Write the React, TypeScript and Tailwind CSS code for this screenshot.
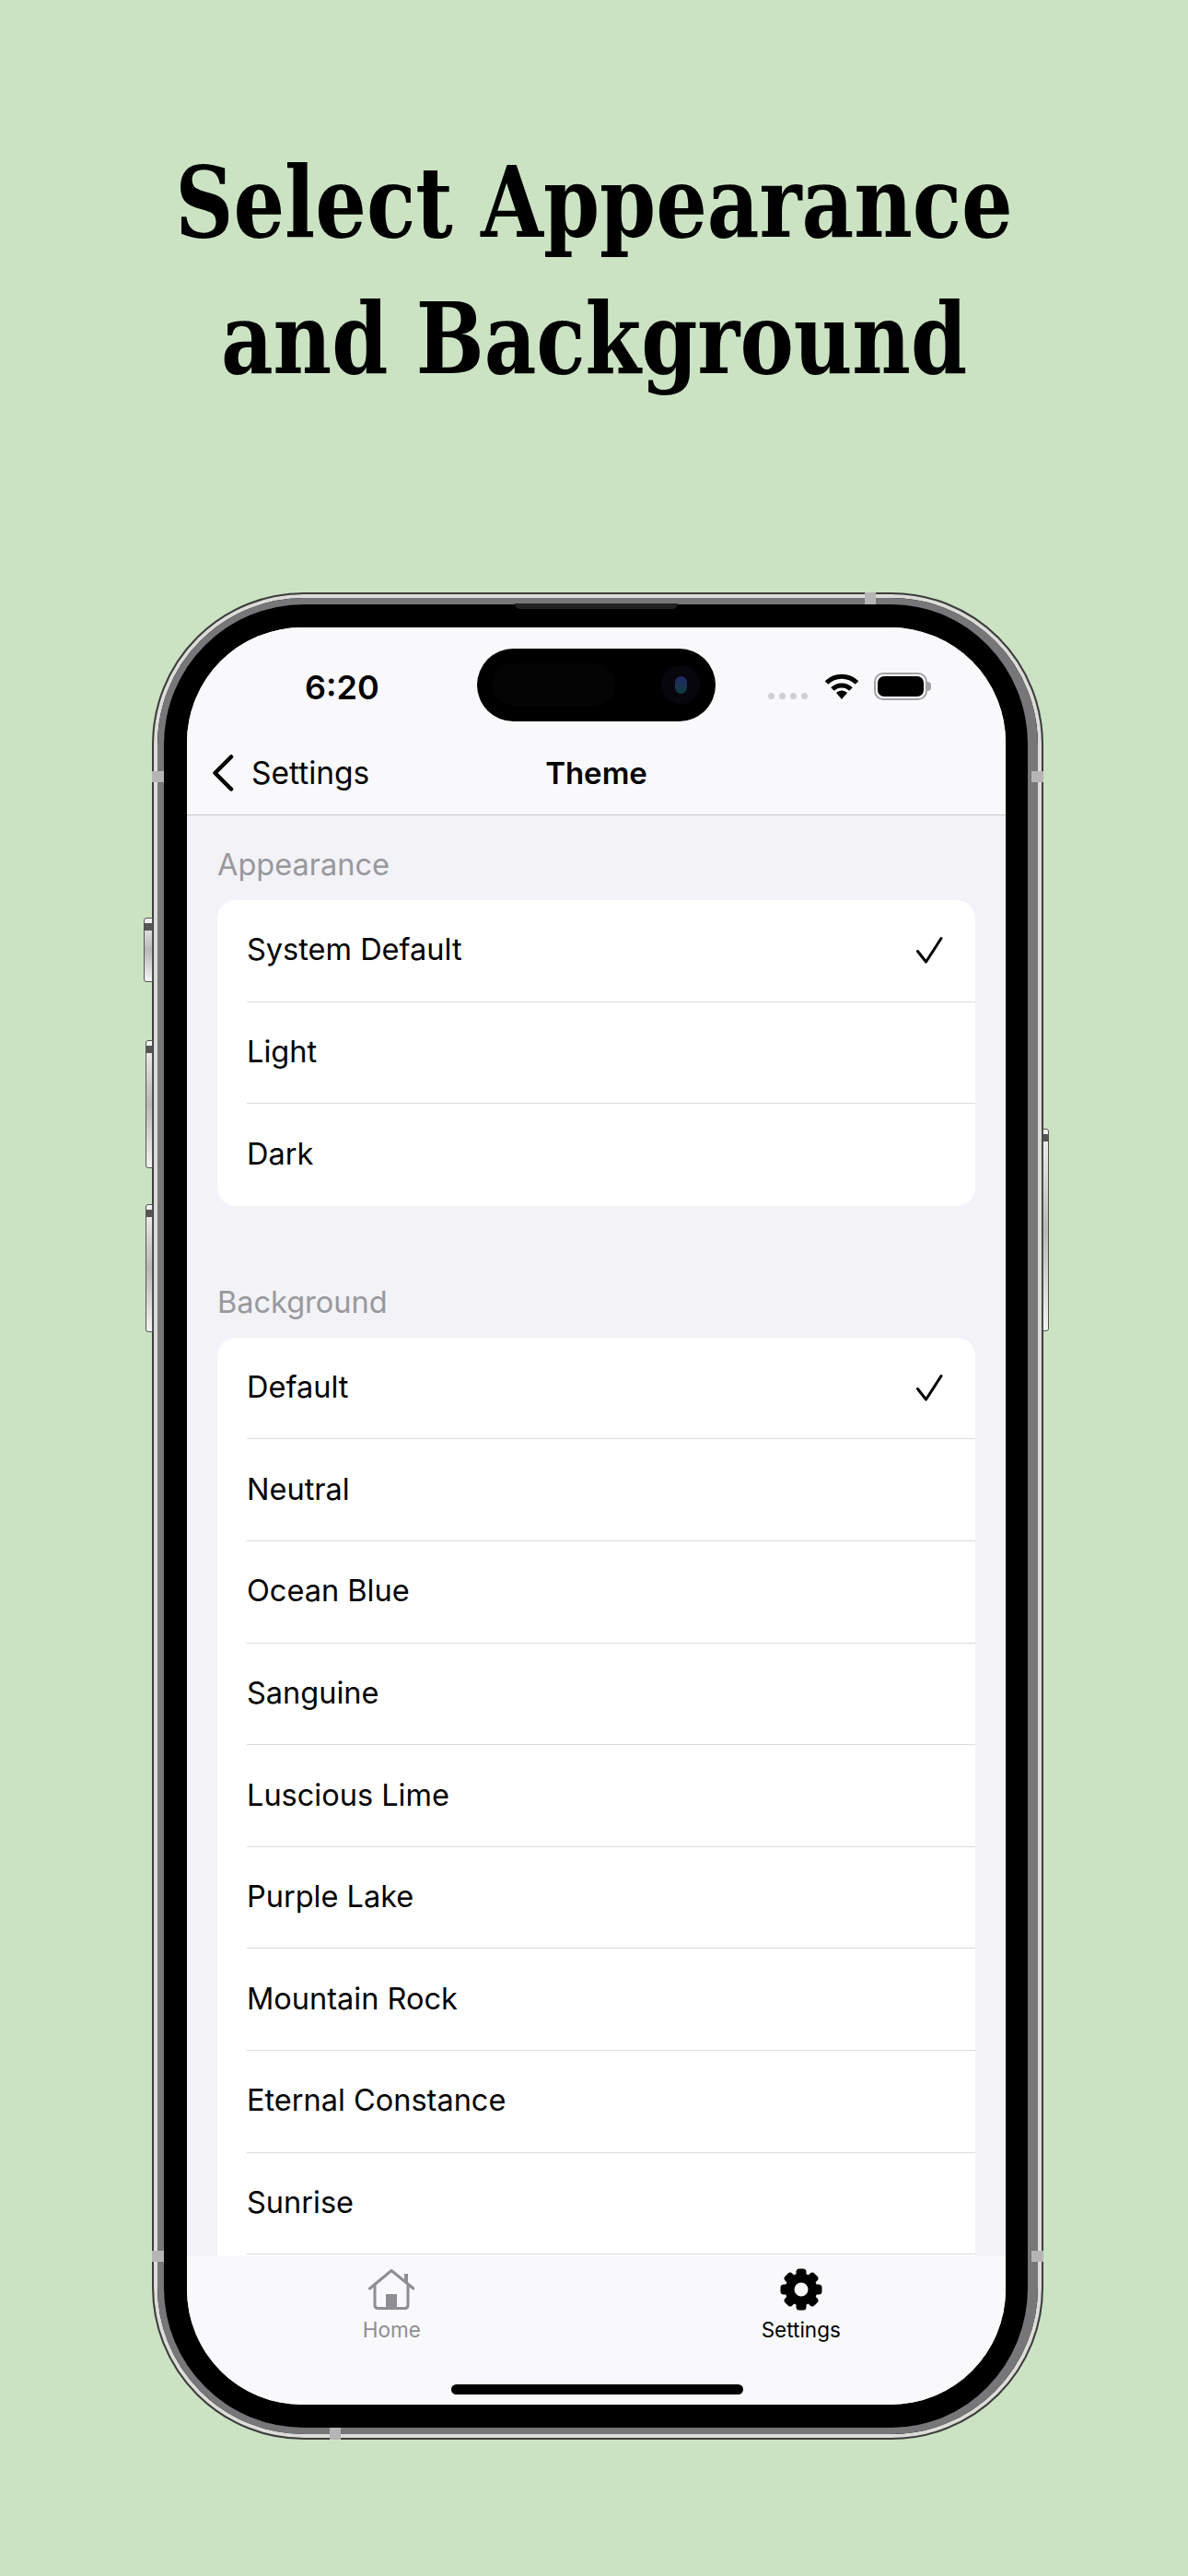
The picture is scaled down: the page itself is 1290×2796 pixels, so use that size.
const appearanceRows = ['System Default', 'Light', 'Dark'];
const backgroundRows = [
  'Default',
  'Neutral',
  'Ocean Blue',
  'Sanguine',
  'Luscious Lime',
  'Purple Lake',
  'Mountain Rock',
  'Eternal Constance',
  'Sunrise',
];

function Check() {
  return (
    <svg width="30" height="32" viewBox="0 0 30 32" fill="none" stroke="#000" strokeWidth="3" strokeLinecap="round" strokeLinejoin="round">
      <path d="M2.5 16.5 L11.5 28 L28 2.5" />
    </svg>
  );
}

function Section({ title, rows, checked, continues }: { title: string; rows: string[]; checked: string; continues?: boolean }) {
  return (
    <section className="mb-[51px]">
      <h2 className="pl-[33px] h-[92px] pt-[34px] text-[32.5px] leading-[40px] text-[#98989d]">{title}</h2>
      <div className="mx-[33px] rounded-[20px] bg-white overflow-hidden">
        {rows.map((row, i) => (
          <div key={row} className="pl-[32px] h-[110.6px]">
            <div className={`h-full pr-[35px] flex items-center justify-between ${continues || i < rows.length - 1 ? 'border-b border-[#dcdcde]' : ''}`}>
              <span className="text-[32.5px] text-black">{row}</span>
              {row === checked && <Check />}
            </div>
          </div>
        ))}
        {/* list scrolls on under the tab bar */}
        {continues && <div className="h-[110px]" />}
      </div>
    </section>
  );
}

function Wifi() {
  return (
    <svg width="38" height="30" viewBox="0 0 38 30" fill="none">
      <path d="M2.5 11 C12 2 26 2 35.5 11" stroke="#000" strokeWidth="5" strokeLinecap="butt" />
      <path d="M9 18 C14.5 12.5 23.5 12.5 29 18" stroke="#000" strokeWidth="5" />
      <path d="M13 22 C16.5 18.5 21.5 18.5 25 22 L19 29 Z" fill="#000" />
    </svg>
  );
}

function Home() {
  return (
    <svg width="50" height="44" viewBox="0 0 50 44" fill="none" stroke="#8e8e93" strokeWidth="3" strokeLinecap="round" strokeLinejoin="round">
      <path d="M1.5 21 L25 1.5 L49 21" />
      <path d="M41 5 V14" strokeWidth="4" strokeLinecap="butt" />
      <path d="M7 17 V39 Q7 42.5 10.5 42.5 H39.5 Q43 42.5 43 39 V17" />
      <rect x="19" y="27" width="12" height="16" fill="#8e8e93" stroke="none" />
    </svg>
  );
}

function Gear() {
  return (
    <svg width="46" height="46" viewBox="-23 -23 46 46">
      {[0, 45, 90, 135, 180, 225, 270, 315].map((deg) => (
        <rect key={deg} x="-5.5" y="-22.5" width="11" height="12" rx="3.5" fill="#000" transform={`rotate(${deg})`} />
      ))}
      <circle r="12.5" fill="none" stroke="#000" strokeWidth="10" />
    </svg>
  );
}

function SideButton({ className }: { className: string }) {
  return (
    <div className={`absolute bg-gradient-to-b from-[#f4f4f4] via-[#b9b9b9] to-[#f4f4f4] border border-[#555] ${className}`}>
      <div className="h-[8px] mt-[5px] bg-[#555]" />
    </div>
  );
}

export default function App() {
  return (
    <main
      className="w-[1290px] h-[2796px] bg-[#cbe3c3] overflow-hidden"
      style={{ fontFamily: 'Inter, "Liberation Sans", sans-serif' }}
    >
      <h1
        className="h-[643px] pt-[146px] text-center text-[106px] leading-[148px] font-bold font-stretch-condensed text-black scale-x-[0.917]"
        style={{ fontFamily: '"DejaVu Serif", serif' }}
      >
        Select Appearance
        <br />
        and Background
      </h1>

      <div className="relative ml-[165px] w-[968px] h-[2005px]">
        <SideButton className="left-[-9px] top-[353px] w-[10px] h-[70px] rounded-l-[3px]" />
        <SideButton className="left-[-7px] top-[486px] w-[8px] h-[139px] rounded-l-[3px]" />
        <SideButton className="left-[-7px] top-[664px] w-[8px] h-[139px] rounded-l-[3px]" />
        <SideButton className="right-[-6px] top-[582px] w-[7px] h-[220px] rounded-r-[3px]" />

        <div className="h-full rounded-[165px] border-2 border-[#3d3d3d] bg-black">
          <div className="h-full rounded-[163px] border-[4px] border-[#dcdcd8]">
            <div className="h-full rounded-[159px] border-[7px] border-r-[11px] border-[#77777a] bg-black py-[25px] pl-[25px] pr-[24px]">
              <div className="h-full rounded-[125px] bg-[#f2f2f7] overflow-hidden flex flex-col">
                <header className="bg-[#f9f9fb] border-b border-[#c8c8ca] h-[204px] shrink-0">
                  <div className="grid grid-cols-[315px_259px_315px] pt-[23px] h-[120px]">
                    <div className="pl-[128px] pt-[20px] text-[36px] leading-[45px] font-semibold text-black">6:20</div>
                    <div className="relative h-[79px] rounded-full bg-black">
                      <div className="absolute left-[17px] top-[16px] w-[133px] h-[46px] rounded-full bg-[#040404]" />
                      <div className="absolute left-[200px] top-[18px] w-[42px] h-[42px] rounded-full bg-[#07060c] flex items-center justify-center">
                        <div className="w-[13px] h-[19px] rounded-full bg-gradient-to-b from-[#23236a] to-[#0f3d3a]" />
                      </div>
                    </div>
                    <div className="flex pl-[57px] pt-[26px] gap-[16px] items-start">
                      <div className="flex gap-[5px] pt-[22px] w-[45px]">
                        {[0, 1, 2, 3].map((d) => (
                          <div key={d} className="w-[7px] h-[7px] rounded-full bg-[#cfcfd1] shrink-0" />
                        ))}
                      </div>
                      <Wifi />
                      <div className="flex items-center">
                        <div className="w-[58px] h-[30px] rounded-[10px] border-2 border-[#a3a3a5] p-[2px]">
                          <div className="h-full rounded-[7px] bg-black" />
                        </div>
                        <div className="w-[4px] h-[10px] rounded-r-full bg-[#a3a3a5]" />
                      </div>
                    </div>
                  </div>
                  <div className="relative flex items-center justify-center h-[76px]">
                    <div className="absolute left-[27px] top-[17px] flex items-center gap-[19px]">
                      <svg width="24" height="40" viewBox="0 0 24 40" fill="none" stroke="#000" strokeWidth="4.5" strokeLinecap="round" strokeLinejoin="round">
                        <path d="M21 2.5 L3.5 20 L21 37.5" />
                      </svg>
                      <span className="text-[33.5px] leading-[42px] text-black">Settings</span>
                    </div>
                    <span className="text-[33px] leading-[42px] font-semibold text-black">Theme</span>
                  </div>
                </header>

                <div className="flex-1 min-h-0 overflow-hidden">
                  <Section title="Appearance" rows={appearanceRows} checked="System Default" />
                  <Section title="Background" rows={backgroundRows} checked="Default" continues />
                </div>

                <nav className="relative shrink-0 h-[161px] bg-[#f9f9fb] grid grid-cols-2 pt-[13px]">
                  <div className="flex flex-col items-center text-[#8e8e93]">
                    <div className="h-[46px] flex items-center"><Home /></div>
                    <span className="mt-[7px] text-[22.5px] leading-[28px]">Home</span>
                  </div>
                  <div className="flex flex-col items-center text-black">
                    <div className="h-[46px] flex items-center"><Gear /></div>
                    <span className="mt-[7px] text-[22.5px] leading-[28px]">Settings</span>
                  </div>
                  <div className="absolute left-[287px] bottom-[11px] w-[317px] h-[11px] rounded-full bg-black" />
                </nav>
              </div>
            </div>
          </div>
        </div>

        {/* speaker slit and antenna bands lie over the frame */}
        <div className="absolute left-[394px] top-[12px] w-[177px] h-[6px] rounded-b-[6px] bg-[#222]" />
        <div className="absolute left-[774px] top-0 w-[12px] h-[13px] bg-[#b5b5b5]" />
        <div className="absolute left-[193px] bottom-0 w-[12px] h-[13px] bg-[#b5b5b5]" />
        <div className="absolute left-0 top-[194px] w-[13px] h-[12px] bg-[#b5b5b5]" />
        <div className="absolute right-0 top-[194px] w-[13px] h-[12px] bg-[#b5b5b5]" />
        <div className="absolute left-0 bottom-[193px] w-[13px] h-[12px] bg-[#b5b5b5]" />
        <div className="absolute right-0 bottom-[193px] w-[13px] h-[12px] bg-[#b5b5b5]" />
      </div>
    </main>
  );
}
